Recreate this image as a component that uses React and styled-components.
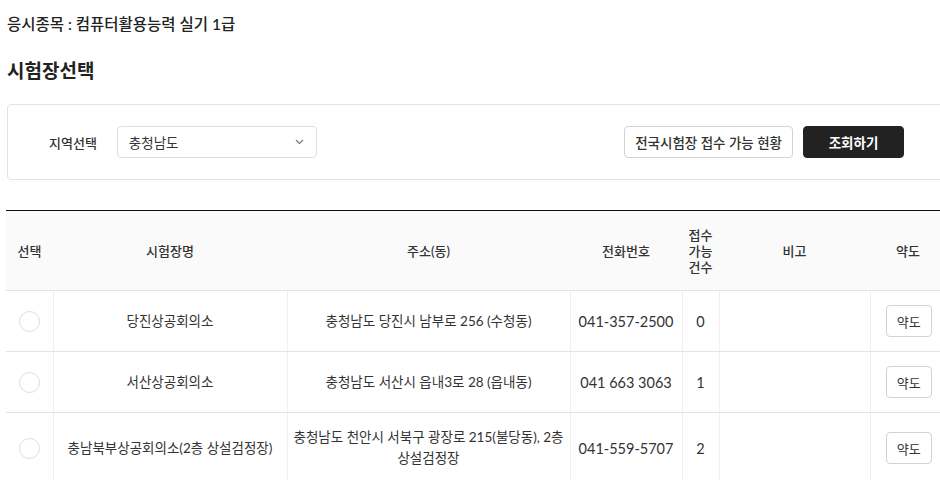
import styled, { createGlobalStyle } from "styled-components";

const GlobalStyle = createGlobalStyle`
  body {
    margin: 0;
    background: #fff;
    color: #222;
    font-family: Lato, "Noto Sans CJK KR", sans-serif;
    overflow: hidden;
  }
`;

const Page = styled.div`
  width: 940px;
  padding: 14px 0 0 6px;
`;

const Subject = styled.div`
  font-size: 15.5px;
  line-height: 21px;
  font-weight: 500;
  padding-left: 1px;
`;

const Title = styled.h2`
  margin: 23px 0 20px;
  font-size: 19px;
  line-height: 26px;
  font-weight: 700;
  padding-left: 1px;
`;

// 지역 선택 박스
const FilterBox = styled.div`
  display: flex;
  align-items: center;
  height: 76px;
  margin-left: 1px;
  padding: 0 41px 0 41px;
  border: 1px solid #e3e3e3;
  border-radius: 4px;
  box-sizing: border-box;
`;

const FilterLabel = styled.span`
  font-size: 13px;
  font-weight: 500;
  color: #333;
  margin-right: 20px;
`;

const SelectBox = styled.div`
  display: flex;
  align-items: center;
  justify-content: space-between;
  width: 200px;
  height: 32px;
  box-sizing: border-box;
  padding: 0 12px 0 11px;
  border: 1px solid #dedede;
  border-radius: 4px;
  font-size: 13.5px;
  color: #333;
`;

const Spacer = styled.div`
  flex: 1;
`;

const Button = styled.button`
  height: 32px;
  box-sizing: border-box;
  padding: 0 ${(p) => (p.$dark ? "0" : "10px")};
  width: ${(p) => (p.$dark ? "101px" : "auto")};
  margin-left: ${(p) => (p.$dark ? "10px" : "0")};
  border: 1px solid ${(p) => (p.$dark ? "#222" : "#d2d2d2")};
  border-radius: 4px;
  background: ${(p) => (p.$dark ? "#222" : "#fff")};
  color: ${(p) => (p.$dark ? "#fff" : "#333")};
  font-family: inherit;
  font-size: 13.5px;
  font-weight: ${(p) => (p.$dark ? 700 : 500)};
  cursor: pointer;
`;

const Table = styled.table`
  width: 940px;
  margin-top: 30px;
  border-collapse: collapse;
  table-layout: fixed;
  border-top: 1px solid #111;
  font-size: 13px;
  color: #333;
`;

const Th = styled.th`
  background: #fafafa;
  height: 79px;
  padding: 0 2px;
  font-weight: 500;
  line-height: 16px;
  border-bottom: 1px solid #e3e3e3;
`;

const Td = styled.td`
  text-align: center;
  vertical-align: middle;
  padding: 14px 6px;
  line-height: 21px;
  height: 31px;
  font-size: ${(p) => (p.$num ? "14.5px" : "13.5px")};
  border-bottom: 1px solid #e3e3e3;
  border-left: 1px solid #f0f0f0;
  &:first-child {
    border-left: none;
  }
`;

const Radio = styled.span`
  display: inline-block;
  width: 19px;
  height: 19px;
  border: 1px solid #ddd;
  border-radius: 50%;
  vertical-align: middle;
`;

const MapButton = styled.button`
  width: 46px;
  height: 32px;
  border: 1px solid #d2d2d2;
  border-radius: 4px;
  background: #fff;
  font-family: inherit;
  font-size: 13px;
  color: #333;
  margin-left: 1px;
`;

const Chevron = () => (
  <svg width="9" height="6" viewBox="0 0 9 6" fill="none">
    <path d="M1 1l3.5 3.5L8 1" stroke="#777" strokeWidth="1.1" />
  </svg>
);

const rows = [
  { name: "당진상공회의소", addr: "충청남도 당진시 남부로 256 (수청동)", tel: "041-357-2500", cnt: 0 },
  { name: "서산상공회의소", addr: "충청남도 서산시 읍내3로 28 (읍내동)", tel: "041 663 3063", cnt: 1 },
  { name: "충남북부상공회의소(2층 상설검정장)", addr: "충청남도 천안시 서북구 광장로 215(불당동), 2층 상설검정장", tel: "041-559-5707", cnt: 2 },
];

export default function App() {
  return (
    <>
      <GlobalStyle />
      <Page>
        <Subject>응시종목 : 컴퓨터활용능력 실기 1급</Subject>
        <Title>시험장선택</Title>

        <FilterBox>
          <FilterLabel>지역선택</FilterLabel>
          <SelectBox>
            <span>충청남도</span>
            <Chevron />
          </SelectBox>
          <Spacer />
          <Button>전국시험장 접수 가능 현황</Button>
          <Button $dark>조회하기</Button>
        </FilterBox>

        <Table>
          <colgroup>
            <col style={{ width: 47 }} />
            <col style={{ width: 234 }} />
            <col style={{ width: 283 }} />
            <col style={{ width: 112 }} />
            <col style={{ width: 37 }} />
            <col style={{ width: 151 }} />
            <col style={{ width: 76 }} />
          </colgroup>
          <thead>
            <tr>
              <Th>선택</Th>
              <Th>시험장명</Th>
              <Th>주소(동)</Th>
              <Th>전화번호</Th>
              <Th>접수 가능 건수</Th>
              <Th>비고</Th>
              <Th>약도</Th>
            </tr>
          </thead>
          <tbody>
            {rows.map((r) => (
              <tr key={r.tel}>
                <Td><Radio /></Td>
                <Td>{r.name}</Td>
                <Td>{r.addr}</Td>
                <Td $num>{r.tel}</Td>
                <Td $num>{r.cnt}</Td>
                <Td></Td>
                <Td><MapButton>약도</MapButton></Td>
              </tr>
            ))}
          </tbody>
        </Table>
      </Page>
    </>
  );
}
